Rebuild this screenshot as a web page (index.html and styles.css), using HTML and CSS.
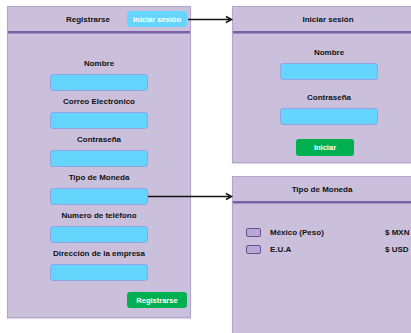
FILE: index.html
```html
<!DOCTYPE html>
<html lang="es">
  <head>
    <meta charset="UTF-8" />
    <meta name="viewport" content="width=device-width, initial-scale=1.0" />
    <title>Registro</title>
    <link rel="stylesheet" href="styles.css">
  </head>
  <body>
    <div class="canvas">
      <section class="panel panel-register">
        <header class="panel-header header-split">
          <h2 class="panel-title">Registrarse</h2>
          <button class="btn btn-blue" type="button">Iniciar sesión</button>
        </header>
        <form class="panel-body form-register">
          <label class="field">
            <span class="field-label">Nombre</span>
            <input class="field-input" type="text" />
          </label>
          <label class="field">
            <span class="field-label">Correo Electrónico</span>
            <input class="field-input" type="email" />
          </label>
          <label class="field">
            <span class="field-label">Contraseña</span>
            <input class="field-input" type="password" />
          </label>
          <label class="field">
            <span class="field-label">Tipo de Moneda</span>
            <input class="field-input" type="text" />
          </label>
          <label class="field">
            <span class="field-label">Numero de teléfono</span>
            <input class="field-input" type="tel" />
          </label>
          <label class="field">
            <span class="field-label">Dirección de la empresa</span>
            <input class="field-input" type="text" />
          </label>
          <div class="form-actions">
            <button class="btn btn-green btn-wide" type="submit">Registrarse</button>
          </div>
        </form>
      </section>

      <section class="panel panel-login">
        <header class="panel-header">
          <h2 class="panel-title">Iniciar sesión</h2>
        </header>
        <form class="panel-body form-login">
          <label class="field">
            <span class="field-label">Nombre</span>
            <input class="field-input" type="text" />
          </label>
          <label class="field">
            <span class="field-label">Contraseña</span>
            <input class="field-input" type="password" />
          </label>
          <button class="btn btn-green btn-login" type="submit">Iniciar</button>
        </form>
      </section>

      <section class="panel panel-currency">
        <header class="panel-header header-shift">
          <h2 class="panel-title">Tipo de Moneda</h2>
        </header>
        <div class="panel-body currency-list">
          <div class="currency-row">
            <span class="check"></span>
            <span class="currency-name">México (Peso)</span>
            <span class="currency-code">$ MXN</span>
          </div>
          <div class="currency-row">
            <span class="check"></span>
            <span class="currency-name">E.U.A</span>
            <span class="currency-code">$ USD</span>
          </div>
        </div>
      </section>

      <svg class="arrows" width="411" height="333" viewBox="0 0 411 333">
        <line x1="188" y1="19.5" x2="230" y2="19.5" />
        <path d="M226 16.5 L231.5 19.5 L226 22.5" />
        <line x1="148" y1="196.5" x2="230" y2="196.5" />
        <path d="M226 193.5 L231.5 196.5 L226 199.5" />
      </svg>
    </div>
  </body>
</html>
```

FILE: styles.css
```css
* {
  box-sizing: border-box;
}
body {
  margin: 0;
  background: #fff;
  font-family: "Liberation Sans", Arial, sans-serif;
  color: #111;
}
.canvas {
  position: relative;
  width: 411px;
  height: 333px;
  overflow: hidden;
}
.panel {
  position: absolute;
  background: #cbc0dc;
  border: 1px solid #b4a4ce;
  box-shadow: 0 1px 1px rgba(120, 100, 150, 0.25);
}
.panel-register {
  left: 7px;
  top: 6px;
  width: 184px;
  height: 312px;
}
.panel-login {
  left: 232px;
  top: 6px;
  width: 192px;
  height: 157px;
}
.panel-currency {
  left: 232px;
  top: 176px;
  width: 192px;
  height: 200px;
}
.panel-header {
  height: 26px;
  display: flex;
  align-items: center;
  justify-content: center;
  border-bottom: 2px solid #7b5fa7;
  box-shadow: 0 1px 0 #a390c4;
}
.header-split {
  justify-content: flex-end;
  gap: 17px;
  padding-right: 3px;
}
.header-shift {
  padding-right: 12px;
}
.panel-title {
  margin: 0;
  font-size: 8px;
  font-weight: bold;
}
.panel-body {
  display: flex;
  flex-direction: column;
  align-items: center;
}
.form-register {
  padding-top: 26px;
  gap: 6px;
}
.form-login {
  padding-top: 15px;
  gap: 13px;
  padding-left: 2px;
}
.field {
  display: flex;
  flex-direction: column;
  align-items: center;
}
.field-label {
  font-size: 8px;
  font-weight: bold;
  line-height: 10px;
  margin-bottom: 5px;
  white-space: nowrap;
}
.field-input {
  width: 98px;
  height: 17px;
  margin: 0;
  padding: 0 4px;
  background: #66d5fd;
  border: 1px solid #8ea4e4;
  border-radius: 3px;
  font-size: 7px;
}
.btn {
  border: none;
  border-radius: 3px;
  color: #fff;
  font-family: inherit;
  font-size: 7.5px;
  font-weight: bold;
  padding: 0;
  cursor: pointer;
}
.btn-blue {
  width: 60px;
  height: 16px;
  background: #66d5fd;
}
.btn-green {
  background: #00b050;
}
.btn-wide {
  width: 60px;
  height: 16px;
}
.btn-login {
  width: 58px;
  height: 17px;
  margin-top: 1px;
  margin-left: -8px;
}
.form-actions {
  align-self: stretch;
  display: flex;
  justify-content: flex-end;
  padding-right: 3px;
  margin-top: 5px;
}
.currency-list {
  align-items: flex-start;
  padding: 21px 0 0 13px;
}
.currency-row {
  display: flex;
  align-items: center;
  height: 17px;
  font-size: 8px;
  font-weight: bold;
}
.check {
  width: 15px;
  height: 9px;
  border: 1.5px solid #6a4f92;
  border-radius: 2px;
  background: #b9a7d6;
  margin-right: 9px;
}
.currency-name {
  width: 115px;
}
.arrows {
  position: absolute;
  left: 0;
  top: 0;
  pointer-events: none;
}
.arrows line {
  stroke: #111;
  stroke-width: 1.5;
}
.arrows path {
  fill: none;
  stroke: #111;
  stroke-width: 1.5;
}
```
